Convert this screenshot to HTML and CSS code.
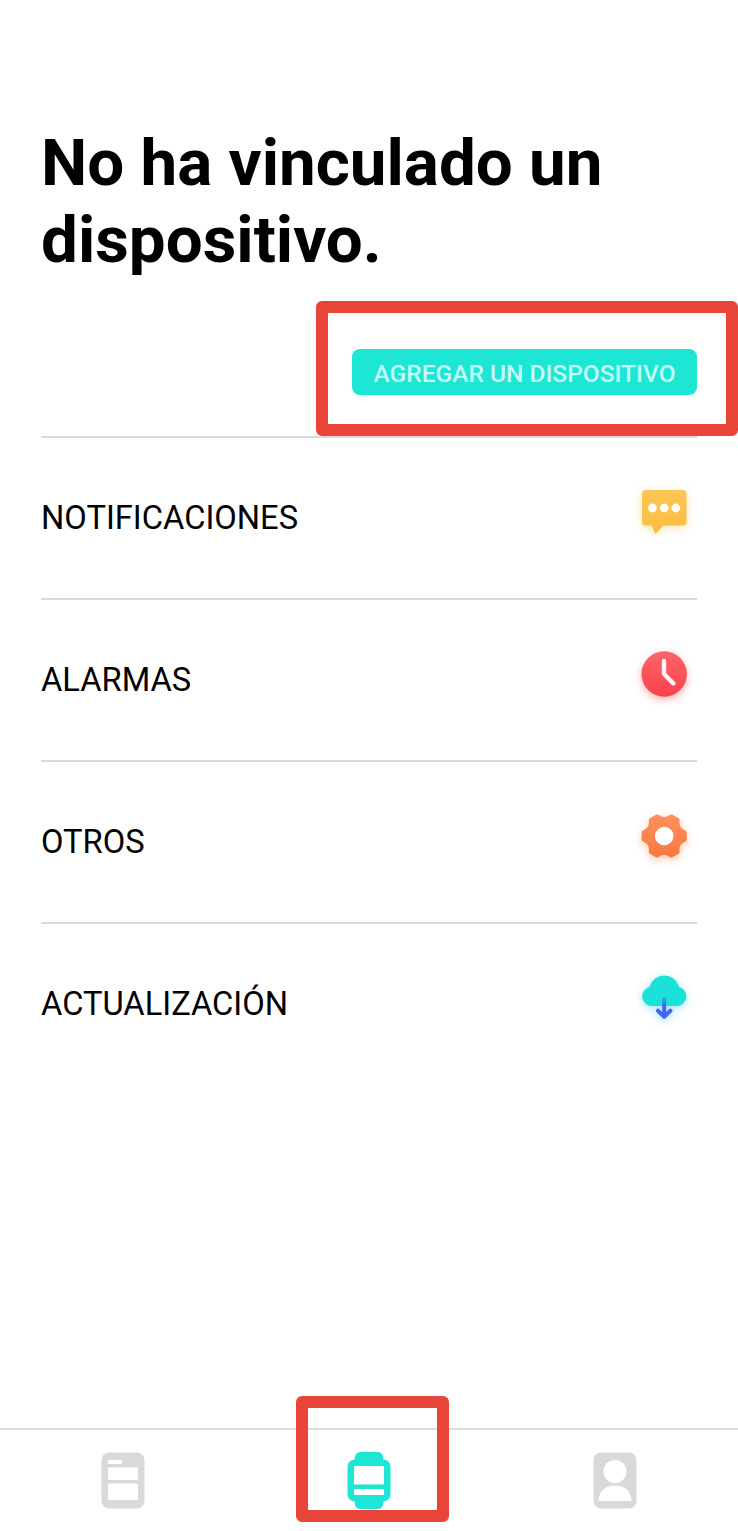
FILE: index.html
```
<!DOCTYPE html>
<html lang="es">
<head>
    <meta charset="UTF-8">
    <meta name="viewport" content="width=device-width, initial-scale=1.0">
    <title>Dispositivo</title>
    <link rel="stylesheet" href="styles.css">
</head>
<body>
    <main>
        <h1>No ha vinculado un dispositivo.</h1>
        <div class="add-device">
            <button type="button">AGREGAR UN DISPOSITIVO</button>
            <div class="highlight highlight-add"></div>
        </div>
        <ul class="menu">
            <li>
                <span>NOTIFICACIONES</span>
                <svg class="icon icon-chat" viewBox="0 0 46 46">
                    <defs>
                        <linearGradient id="yellow" x1="0" y1="0" x2="0" y2="1">
                            <stop offset="0" stop-color="#fbc754"/>
                            <stop offset="1" stop-color="#fbbd3f"/>
                        </linearGradient>
                    </defs>
                    <path fill="url(#yellow)" d="M5 1h36.500a4 4 0 0 1 4 4v27.500a4 4 0 0 1-4 4H22l-6 7q-1.800 1.600-2.900-.5l-2.300-6.500H5a4 4 0 0 1-4-4V5a4 4 0 0 1 4-4z"/>
                    <g fill="#fffdf5">
                        <circle cx="11.500" cy="19" r="4.400"/>
                        <circle cx="23.200" cy="19" r="4.400"/>
                        <circle cx="34.800" cy="19" r="4.400"/>
                    </g>
                </svg>
            </li>
            <li>
                <span>ALARMAS</span>
                <svg class="icon icon-clock" viewBox="0 0 46 46">
                    <defs>
                        <linearGradient id="red" x1="0" y1="0" x2="0" y2="1">
                            <stop offset="0" stop-color="#fb646b"/>
                            <stop offset="1" stop-color="#fb424c"/>
                        </linearGradient>
                    </defs>
                    <circle cx="23.200" cy="23" r="22.700" fill="url(#red)"/>
                    <path d="M23 10v13l9.500 9.500" fill="none" stroke="#fff4f4" stroke-width="4.400" stroke-linecap="round" stroke-linejoin="round"/>
                </svg>
            </li>
            <li>
                <span>OTROS</span>
                <svg class="icon icon-gear" viewBox="0 0 46 46">
                    <defs>
                        <linearGradient id="orange" x1="0" y1="-22" x2="0" y2="22" gradientUnits="userSpaceOnUse">
                            <stop offset="0" stop-color="#fd9160"/>
                            <stop offset="1" stop-color="#f9773e"/>
                        </linearGradient>
                    </defs>
                    <g transform="translate(23.200 23)">
                        <path fill="url(#orange)" stroke="url(#orange)" stroke-width="6" stroke-linejoin="round" d="M19.600-3V3Q11.300 6.500 12.400 15.500L7.200 18.500Q0 13 -7.200 18.500L-12.400 15.500Q-11.300 6.500-19.600 3V-3Q-11.300-6.500-12.400-15.500L-7.200-18.500Q0-13 7.200-18.500L12.400-15.500Q11.300-6.500 19.600-3z"/>
                        <circle r="9.300" fill="#fff"/>
                    </g>
                </svg>
            </li>
            <li>
                <span>ACTUALIZACIÓN</span>
                <svg class="icon icon-cloud" viewBox="0 0 46 46">
                    <defs>
                        <linearGradient id="arrow" x1="0" y1="23" x2="0" y2="44" gradientUnits="userSpaceOnUse">
                            <stop offset="0" stop-color="#28aee4"/>
                            <stop offset=".4" stop-color="#3d68ee"/>
                            <stop offset="1" stop-color="#4668f3"/>
                        </linearGradient>
                    </defs>
                    <path fill="#1be1d8" d="M10 31a9.700 9.700 0 0 1-1.700-19A15.500 15.500 0 0 1 38.200 12a9.700 9.700 0 0 1-1.700 19z"/>
                    <path d="M23.200 24v17.500M17 35.700l6.200 6 6.200-6" fill="none" stroke="url(#arrow)" stroke-width="4" stroke-linecap="round" stroke-linejoin="round"/>
                </svg>
            </li>
        </ul>
    </main>
    <nav>
        <a>
            <svg class="tab" viewBox="0 0 44 58">
                <path fill="#d9d9d9" fill-rule="evenodd" d="M8 .5h28a7.500 7.500 0 0 1 7.500 7.500v41a7.500 7.500 0 0 1-7.500 7.500H8a7.500 7.500 0 0 1-7.500-7.500V8A7.500 7.500 0 0 1 8 .5zM7 8v4h14V8zM7 15.500v11.500a1 1 0 0 0 1 1h28a1 1 0 0 0 1-1v-11.500zM8 31.500a1 1 0 0 0-1 1v14.500a1 1 0 0 0 1 1h28a1 1 0 0 0 1-1V32.500a1 1 0 0 0-1-1z"/>
            </svg>
        </a>
        <a class="active">
            <svg class="tab" viewBox="0 0 44 58">
                <path fill="#1de6d4" fill-rule="evenodd" d="M13 0h18q5 0 5.500 7.500Q43.500 8.500 43.500 15v27q0 6.500-7 7.500Q36 57 31 57H13q-5 0-5.500-7.500Q.5 48.500.5 42V15q0-6.500 7-7.500Q8 0 13 0zM7 14v18.500h30V14zM7 37v6h30v-6z"/>
            </svg>
            <div class="highlight highlight-tab"></div>
        </a>
        <a>
            <svg class="tab" viewBox="0 0 44 58">
                <path fill="#d9d9d9" d="M8 .5h28a7.500 7.500 0 0 1 7.500 7.500v41a7.500 7.500 0 0 1-7.500 7.500H8a7.500 7.500 0 0 1-7.500-7.500V8A7.500 7.500 0 0 1 8 .5z"/>
                <circle cx="22" cy="19.500" r="11.500" fill="#fff"/>
                <path fill="#fff" d="M5.500 49C6 38 13 33.500 22 33.500S38 38 38.500 49z"/>
            </svg>
        </a>
    </nav>
</body>
</html>
```

FILE: styles.css
```
* {
    box-sizing: border-box;
}
body {
    margin: 0;
    height: 1531px;
    display: flex;
    flex-direction: column;
    background-color: #fff;
    color: #000;
    font-family: Roboto, sans-serif;
    overflow: hidden;
}
main {
    flex: 1;
    padding: 124px 41px 0;
}
h1 {
    margin: 0;
    font-size: 65.5px;
    font-weight: 700;
    line-height: 77px;
}
.add-device {
    position: relative;
    display: flex;
    justify-content: flex-end;
    padding-top: 71px;
    height: 157.500px;
}
button {
    width: 345px;
    height: 46px;
    padding: 2px 0 0;
    border: none;
    border-radius: 8px;
    background-color: #1de6d4;
    color: #c4fbf8;
    font-family: inherit;
    font-size: 24.500px;
    font-weight: 500;
    white-space: nowrap;
}
/* red frames drawn over the page */
.highlight {
    position: absolute;
    border: 12px solid #e84538;
    border-radius: 6px;
}
.highlight-add {
    top: 23px;
    right: -41px;
    width: 422px;
    height: 135px;
}
.highlight-tab {
    top: -34px;
    left: 50%;
    width: 153px;
    height: 126px;
    margin-left: -73px;
}
.menu {
    margin: 0;
    padding: 0;
    list-style: none;
}
.menu li {
    display: flex;
    align-items: center;
    justify-content: space-between;
    height: 162px;
    padding: 1px 10px 0 0;
    border-top: 2px solid #dadada;
    font-size: 32.700px;
}
.icon {
    width: 46px;
    height: 46px;
    margin-bottom: 13px;
    overflow: visible;
}
.icon-chat {
    filter: drop-shadow(0 2px 4px #fbc75480);
}
.icon-clock {
    filter: drop-shadow(0 3px 4px #fb505a70);
}
.icon-gear {
    filter: drop-shadow(0 3px 4px #fb855070);
}
.icon-cloud {
    filter: drop-shadow(0 2px 4px #40c8f580);
}
nav {
    display: flex;
    height: 103px;
    border-top: 2px solid #dcdcdc;
}
nav a {
    position: relative;
    flex: 1;
    display: flex;
    justify-content: center;
    padding-top: 22px;
}
.tab {
    width: 44px;
    height: 58px;
}
```
